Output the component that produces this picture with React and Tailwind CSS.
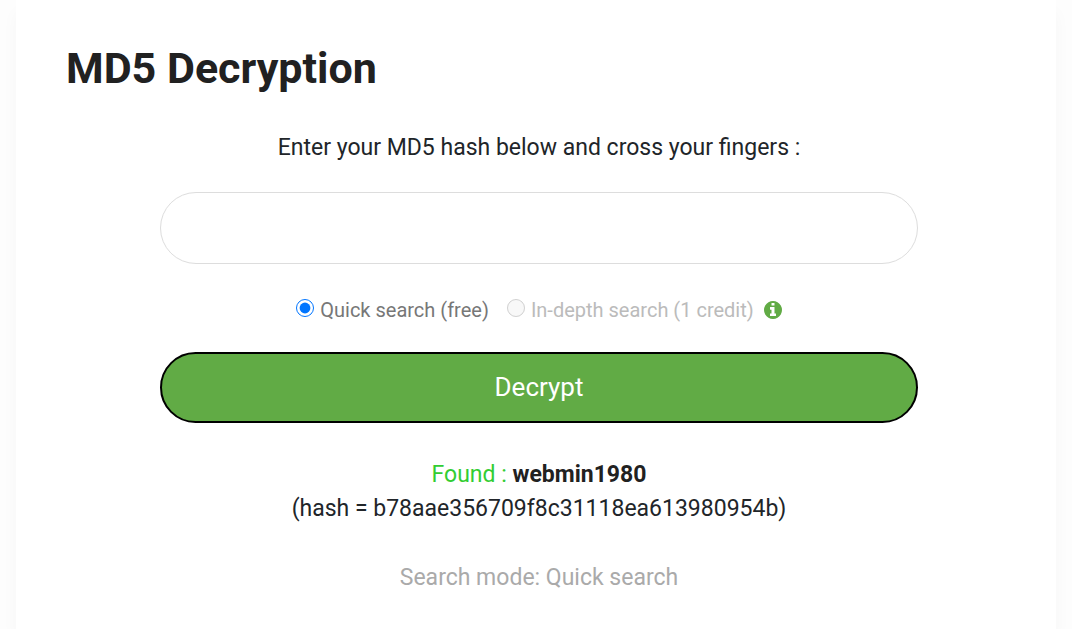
function InfoIcon({ className }) {
  return (
    <svg viewBox="0 128 1536 1536" fill="currentColor" aria-hidden="true" className={className}>
      <path d="M1024 1376v-160q0-14-9-23t-23-9h-96v-512q0-14-9-23t-23-9h-320q-14 0-23 9t-9 23v160q0 14 9 23t23 9h96v320h-96q-14 0-23 9t-9 23v160q0 14 9 23t23 9h448q14 0 23-9t9-23zm-128-896v-160q0-14-9-23t-23-9h-192q-14 0-23 9t-9 23v160q0 14 9 23t23 9h192q14 0 23-9t9-23zm640 416q0 209-103 385.5t-279.5 279.5-385.5 103-385.5-103-279.5-279.5-103-385.5 103-385.5 279.5-279.5 385.5-103 385.5 103 279.5 279.5 103 385.5z" />
    </svg>
  );
}

export default function App() {
  return (
    <div className="min-h-screen bg-[#fdfdfd] px-4 font-['Roboto',sans-serif] text-[#212529]">
      <main className="min-h-screen bg-white pt-10 pr-11 pb-8 pl-[50px] shadow-[0_12px_16px_rgba(0,0,0,0.03)]">
        <h1 className="text-[43px] leading-14 font-bold text-[#212121]">MD5 Decryption</h1>
        <form className="mx-[94px] mt-[34px] flex flex-col text-center" onSubmit={(e) => e.preventDefault()}>
          <label htmlFor="hash" className="text-[23px] leading-9">
            Enter your MD5 hash below and cross your fingers :
          </label>
          <input id="hash" type="text" className="mt-[26px] h-[72px] w-full rounded-full border border-[#dddddd] bg-white px-8 text-2xl" />
          <div className="mt-7 flex h-9 items-center justify-center text-xl text-[#777777]">
            <input id="quick" type="radio" name="mode" defaultChecked className="mr-1.5 mb-1 size-[18px]" />
            <label htmlFor="quick">Quick search (free)</label>
            <input id="depth" type="radio" name="mode" disabled className="mr-1.5 mb-1 ml-[18px] size-[18px]" />
            <label htmlFor="depth" className="text-[#bbbbbb]">In-depth search (1 credit)</label>
            <InfoIcon className="ml-2.5 size-[18px] text-[#61ab45]" />
          </div>
          <button type="submit" className="mt-6 h-[71px] w-full rounded-full border-2 border-black bg-[#61ab45] text-[26px] text-white">
            Decrypt
          </button>
        </form>
        <section className="mt-[35px] text-center text-[23px] leading-[34px]">
          <p>
            <span className="text-[#32cd32]">Found :</span> <b className="text-[#212121]">webmin1980</b>
          </p>
          <p>(hash = b78aae356709f8c31118ea613980954b)</p>
          <p className="mt-[35px] text-[#aaaaaa]">Search mode: Quick search</p>
        </section>
      </main>
    </div>
  );
}
